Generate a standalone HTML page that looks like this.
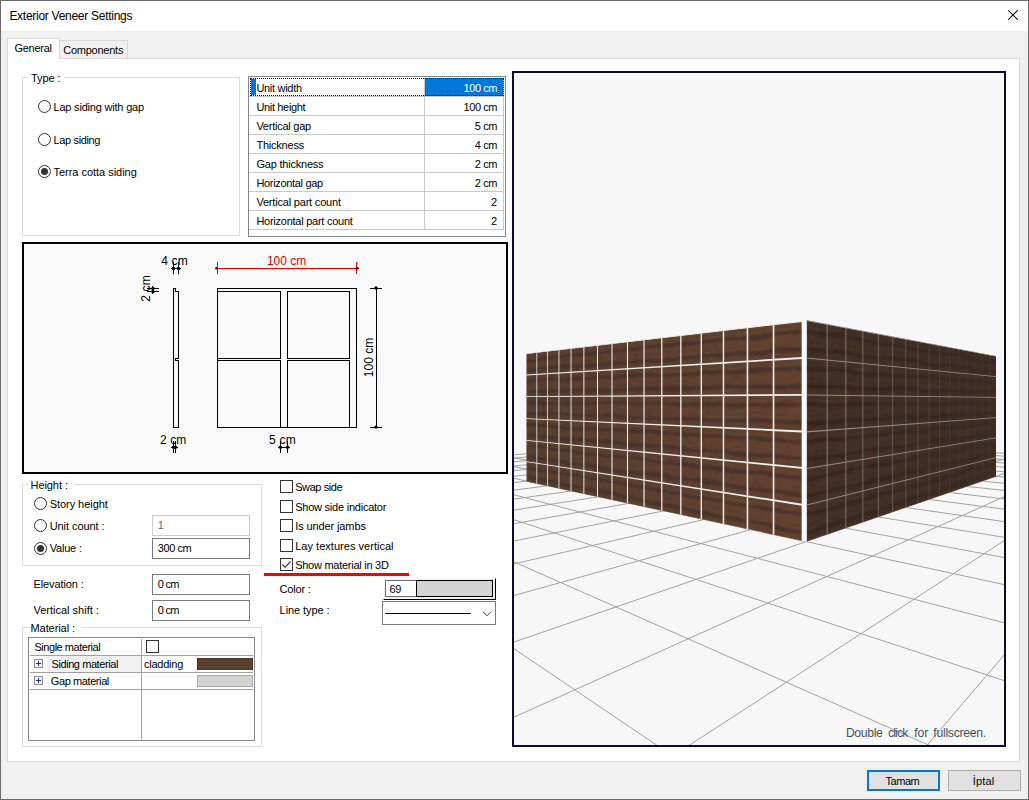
<!DOCTYPE html>
<html><head><meta charset="utf-8"><title>Exterior Veneer Settings</title>
<style>
html,body{margin:0;padding:0}
body{width:1029px;height:800px;position:relative;overflow:hidden;background:#f0f0f0;font-family:"Liberation Sans",sans-serif;font-size:11px;color:#000}
div,span{position:absolute;box-sizing:border-box}
.t{white-space:nowrap;line-height:1;}
.gb{border:1px solid #dcdcdc}
.gbl{background:#fff;height:12px}
.rad{width:13px;height:13px;border-radius:50%;border:1px solid #333;background:#fff}
.rad.on::after{content:"";position:absolute;left:2px;top:2px;width:7px;height:7px;border-radius:50%;background:#333}
.cb{width:13px;height:13px;border:1px solid #333;background:#fff}
.ed{border:1px solid #7a7a7a;background:#fff}
.hl{background:#c8c8c8;height:1px}
.vl{background:#c8c8c8;width:1px}
</style></head><body>
<div style="left:0;top:0;width:1029px;height:800px;border:1px solid #6b6b6b"></div>
<div style="left:1px;top:1px;width:1027px;height:30px;background:#fff"></div>
<svg style="position:absolute;left:1008px;top:10px" width="10" height="10" viewBox="0 0 10 10"><path d="M0.3 0.3L9.7 9.7M9.7 0.3L0.3 9.7" stroke="#000" stroke-width="1.05" fill="none"/></svg>
<div style="left:7px;top:58px;width:1013px;height:704px;background:#fff;border:1px solid #d9d9d9"></div>
<div style="left:59px;top:40px;width:69px;height:19px;background:#f0f0f0;border:1px solid #d9d9d9;border-bottom:none;height:18px"></div>
<div style="left:7px;top:38px;width:53px;height:21px;background:#fff;border:1px solid #d9d9d9;border-bottom:none"></div>
<div class="gb" style="left:22px;top:77px;width:218px;height:159px"></div>
<div class="gbl" style="left:29px;top:72px;width:36px"></div>
<div class="rad" style="left:38px;top:100px"></div>
<div class="rad" style="left:38px;top:133px"></div>
<div class="rad on" style="left:38px;top:165px"></div>
<div style="left:248px;top:76px;width:258px;height:161px;border:1px solid #828790;background:#fff"></div>
<div class="hl" style="left:249px;top:96px;width:255px"></div>
<div class="hl" style="left:249px;top:115px;width:255px"></div>
<div class="hl" style="left:249px;top:134px;width:255px"></div>
<div class="hl" style="left:249px;top:153px;width:255px"></div>
<div class="hl" style="left:249px;top:172px;width:255px"></div>
<div class="hl" style="left:249px;top:191px;width:255px"></div>
<div class="hl" style="left:249px;top:210px;width:255px"></div>
<div class="hl" style="left:249px;top:229px;width:255px"></div>
<div class="vl" style="left:424px;top:78px;height:152px"></div>
<div class="vl" style="left:503px;top:78px;height:152px"></div>
<div style="left:425px;top:78px;width:78px;height:18px;background:#0078d7"></div>
<div style="left:251px;top:79px;width:5px;height:16px;background:#0078d7"></div>
<div style="left:250px;top:78px;width:254px;height:18px;border:1px dotted #000"></div>
<div style="left:22px;top:242px;width:486px;height:232px;border:2px solid #000;background:#fafafa"></div>
<svg style="position:absolute;left:24px;top:244px" width="482" height="228" viewBox="24 244 482 228">
<text x="266.9" y="264.7" font-family="'Liberation Sans', sans-serif" font-size="12" fill="#e00000" textLength="39.4" lengthAdjust="spacing">100 cm</text>
<text x="161.2" y="265.2" font-family="'Liberation Sans', sans-serif" font-size="12" fill="#000" textLength="26.5" lengthAdjust="spacing">4 cm</text>
<text x="160.0" y="443.6" font-family="'Liberation Sans', sans-serif" font-size="12" fill="#000" textLength="26.3" lengthAdjust="spacing">2 cm</text>
<text x="269" y="443.7" font-family="'Liberation Sans', sans-serif" font-size="12" fill="#000" textLength="26.7" lengthAdjust="spacing">5 cm</text>
<text transform="translate(150.4 301.8) rotate(-90)" font-family="'Liberation Sans', sans-serif" font-size="12" fill="#000" textLength="26.5" lengthAdjust="spacing">2 cm</text>
<text transform="translate(372.7 377.2) rotate(-90)" font-family="'Liberation Sans', sans-serif" font-size="12" fill="#000" textLength="39.4" lengthAdjust="spacing">100 cm</text>
<g fill="none" stroke="#000" stroke-width="1" shape-rendering="crispEdges">
<path d="M173.5 288.5H175.5V291.5H178.5V358.5H175.5V360.5H178.5V427.5H173.5Z"/>
<path d="M217.5 288.5H356.5V427.5H217.5Z"/>
<path d="M217.5 291.5H280.5V358.5H217.5"/>
<path d="M287.5 291.5H349.5V358.5H287.5Z"/>
<path d="M217.5 360.5H280.5V427.5"/>
<path d="M287.5 427.5V360.5H349.5V427.5"/>
<path d="M173.5 262V274M178.5 262V274M171 268.5H181"/>
<path d="M147 288.5H159M147 291.5H159M152.5 286V294"/>
<path d="M173.5 441V453M175.5 441V453M171 447.5H178"/>
<path d="M280.5 441V453M287.5 441V453M278 447.5H290"/>
<path d="M376.5 288.5V427.5M370 288.5H382M370 427.5H382"/>
</g>
<g fill="#000">
<circle cx="173.5" cy="268.5" r="1.7"/>
<circle cx="178.5" cy="268.5" r="1.7"/>
<circle cx="152.9" cy="288.5" r="1.7"/>
<circle cx="152.9" cy="291.5" r="1.7"/>
<circle cx="173.5" cy="447.3" r="1.7"/>
<circle cx="175.5" cy="447.3" r="1.7"/>
<circle cx="280.5" cy="447.3" r="1.7"/>
<circle cx="287.5" cy="447.3" r="1.7"/>
<circle cx="376.0" cy="287.9" r="1.7"/>
<circle cx="376.0" cy="427.1" r="1.7"/>
</g>
<g fill="none" stroke="#e60000" stroke-width="1" shape-rendering="crispEdges"><path d="M217.5 262V274M356.5 262V274M215 268.5H359"/></g>
<circle cx="216.6" cy="268.3" r="1.3" fill="#300"/><circle cx="357.4" cy="268.3" r="1.3" fill="#300"/>
</svg>
<div class="gb" style="left:22px;top:484px;width:240px;height:82px"></div>
<div class="gbl" style="left:29px;top:479px;width:45px"></div>
<div class="rad" style="left:34px;top:497px"></div>
<div class="rad" style="left:34px;top:519px"></div>
<div class="rad on" style="left:34px;top:542px"></div>
<div class="ed" style="left:152px;top:515px;width:98px;height:21px;border-color:#cccccc"></div>
<div class="ed" style="left:152px;top:538px;width:98px;height:21px"></div>
<div class="ed" style="left:152px;top:574px;width:98px;height:21px"></div>
<div class="ed" style="left:152px;top:600px;width:98px;height:21px"></div>
<div class="gb" style="left:22px;top:627px;width:240px;height:120px"></div>
<div class="gbl" style="left:29px;top:622px;width:52px"></div>
<div style="left:28px;top:637px;width:227px;height:104px;border:1px solid #828790;background:#fff"></div>
<div class="hl" style="left:30px;top:655px;width:223px;background:#a0a0a0"></div>
<div class="hl" style="left:30px;top:672px;width:223px;background:#a0a0a0"></div>
<div class="hl" style="left:30px;top:689px;width:223px;background:#a0a0a0"></div>
<div class="vl" style="left:141px;top:639px;height:100px;background:#a0a0a0"></div>
<div style="left:47px;top:656px;width:94px;height:16px;background:#f0f0f0"></div>
<div class="cb" style="left:146px;top:640px"></div>
<svg style="position:absolute;left:34px;top:659px" width="9" height="9" viewBox="0 0 9 9"><rect x="0.5" y="0.5" width="8" height="8" fill="#f4f4f4" stroke="#919191"/><path d="M2 4.5H7M4.5 2V7" stroke="#1e3287" stroke-width="1"/></svg>
<svg style="position:absolute;left:34px;top:676px" width="9" height="9" viewBox="0 0 9 9"><rect x="0.5" y="0.5" width="8" height="8" fill="#f4f4f4" stroke="#919191"/><path d="M2 4.5H7M4.5 2V7" stroke="#1e3287" stroke-width="1"/></svg>
<div style="left:197px;top:658px;width:56px;height:12px;background:#5c402f;border:1px solid #4c3528"></div>
<div style="left:197px;top:675px;width:56px;height:12px;background:#d3d3d3;border:1px solid #a9a9a9"></div>
<div class="cb" style="left:280px;top:480px"></div>
<div class="cb" style="left:280px;top:500px"></div>
<div class="cb" style="left:280px;top:519px"></div>
<div class="cb" style="left:280px;top:539px"></div>
<div class="cb" style="left:280px;top:558px"></div>
<svg style="position:absolute;left:280px;top:558px" width="13" height="13" viewBox="0 0 13 13"><path d="M2.5 6.5L5.2 9.3L10.5 3.6" stroke="#222" stroke-width="1.1" fill="none"/></svg>
<div style="left:264px;top:573px;width:145px;height:3px;background:#fd0000"></div>
<div style="left:383px;top:578px;width:113px;height:22px;background:#f0f0f0;border-top:1px solid #fff;border-left:1px solid #fff;border-right:1px solid #000;border-bottom:1px solid #000"></div>
<div style="left:385px;top:580px;width:108px;height:17px;background:#fff;border:1px solid #6d6d6d"></div>
<div style="left:416px;top:580px;width:77px;height:17px;background:#d3d3d3;border:1px solid #000"></div>
<div style="left:382px;top:601px;width:114px;height:24px;background:#fff;border:1px solid #7a7a7a"></div>
<div style="left:385px;top:612.7px;width:86px;height:1.2px;background:#000"></div>
<svg style="position:absolute;left:482px;top:610px" width="10" height="8" viewBox="0 0 10 8"><path d="M1 1.8L5 5.8L9 1.8" stroke="#444" stroke-width="1" fill="none"/></svg>
<div style="left:512px;top:71px;width:494px;height:676px;border:2px solid #0b0b2b;background:#f7f7f7;overflow:hidden"><svg width="490" height="672" viewBox="514 73 490 672" style="position:absolute;left:0;top:0;display:block">
<defs>
<filter id="wav" x="500" y="300" width="520" height="260" filterUnits="userSpaceOnUse">
<feTurbulence type="fractalNoise" baseFrequency="0.035 0.09" numOctaves="2" seed="5" result="n"/>
<feDisplacementMap in="SourceGraphic" in2="n" scale="5" xChannelSelector="R" yChannelSelector="G" result="d"/>
<feGaussianBlur in="d" stdDeviation="0.8"/>
</filter>
<clipPath id="cl"><polygon points="526.5,353.8 802,321.3 802,540.8 526.5,481.4"/></clipPath><clipPath id="cr"><polygon points="806.5,320.5 996,356.2 996,476.6 806.5,541.5"/></clipPath>
<linearGradient id="gl" gradientUnits="userSpaceOnUse" x1="526" y1="0" x2="802" y2="0"><stop offset="0" stop-color="#5e4434"/><stop offset="0.6" stop-color="#664735"/><stop offset="1" stop-color="#6a4834"/></linearGradient>
<linearGradient id="gr" gradientUnits="userSpaceOnUse" x1="806" y1="0" x2="996" y2="0"><stop offset="0" stop-color="#4b362b"/><stop offset="0.5" stop-color="#48352b"/><stop offset="1" stop-color="#45332a"/></linearGradient>
<linearGradient id="ml" gradientUnits="userSpaceOnUse" x1="526" y1="0" x2="802" y2="0"><stop offset="0" stop-color="#fff" stop-opacity="1.0"/><stop offset="1" stop-color="#fff" stop-opacity="1.0"/></linearGradient>
<linearGradient id="mr" gradientUnits="userSpaceOnUse" x1="806" y1="0" x2="996" y2="0"><stop offset="0" stop-color="#fff" stop-opacity="1.0"/><stop offset="1" stop-color="#fff" stop-opacity="0.85"/></linearGradient>
<mask id="mkl" maskUnits="userSpaceOnUse" x="500" y="300" width="520" height="260"><rect x="500" y="300" width="520" height="260" fill="url(#ml)"/></mask>
<mask id="mkr" maskUnits="userSpaceOnUse" x="500" y="300" width="520" height="260"><rect x="500" y="300" width="520" height="260" fill="url(#mr)"/></mask>
</defs>
<rect x="514" y="73" width="490" height="672" fill="#f7f7f7"/>
<path d="M13520.37 5187.6L1436.69 481.06M-7788.52 5184.87L-22.41 497.67M10243.16 5187.18L1372.1 476.91M-4034.02 5185.36L61.69 490.94M6965.95 5186.76L1313.65 473.15M-279.52 5185.84L135.15 485.07M3688.74 5186.34L1260.51 469.74M3474.97 5186.32L199.88 479.9M411.53 5185.92L1211.98 466.62M7229.47 5186.8L257.35 475.3M-2865.68 5185.51L1167.49 463.76M10983.97 5187.28L308.7 471.2M-6142.9 5185.09L1126.56 461.13M7004.7 2649.77L354.87 467.51M-3017.49 2305.34L1088.77 458.7M3419.07 1253.19L396.61 464.17M-1288.3 1261.69L1053.78 456.45M2578.64 925.84L434.52 461.14M-782.18 956.22L1021.28 454.37M2203.52 779.74L469.1 458.38M-540.51 810.36L991.02 452.42M1991.06 696.99L500.78 455.84M-398.96 724.93L962.78 450.61M1854.32 643.72L529.91 453.52M-305.99 668.82L936.36 448.91M1758.93 606.57L556.78 451.37M-240.25 629.14L911.58 447.32M1688.61 579.18L581.65 449.38M-191.31 599.6L888.31 445.82M1634.62 558.15L604.73 447.53M-153.46 576.76L866.4 444.42M1591.86 541.5L626.21 445.82M-123.31 558.56L845.75 443.09M1557.16 527.98L646.24 444.22M-98.73 543.72L826.24 441.84M1528.43 516.79L664.98 442.72M-78.3 531.4L807.79 440.65M1504.27 507.38L682.54 441.32M-61.06 520.99L790.3 439.53M1483.65 499.35L699.02 440M-46.32 512.09L773.72 438.46M1465.85 492.42L714.54 438.76M-33.56 504.39L757.96 437.45M1450.34 486.37L729.16 437.59M-22.41 497.67L742.97 436.48M1436.69 481.06L742.97 436.48" stroke="#a0a4a0" stroke-width="1" fill="none"/>
<polygon points="526.5,353.8 802,321.3 802,540.8 526.5,481.4" fill="url(#gl)"/>
<g clip-path="url(#cl)"><g mask="url(#mkl)"><g filter="url(#wav)"><polygon points="526.5,355.07 802,323.5 802,325.7 526.5,356.34" fill="#2e211b" fill-opacity="0.3"/><polygon points="526.5,358.25 802,329.01 802,334.14 526.5,361.22" fill="#2e211b" fill-opacity="0.55"/><polygon points="526.5,362.6 802,336.53 802,338.37 526.5,363.66" fill="#2e211b" fill-opacity="0.25"/><polygon points="526.5,365.25 802,341.12 802,343.32 526.5,366.52" fill="#2e211b" fill-opacity="0.32"/><polygon points="526.5,368.32 802,346.44 802,351.94 526.5,371.5" fill="#2e211b" fill-opacity="0.55"/><polygon points="526.5,372.88 802,354.33 802,356.53 526.5,374.15" fill="#2e211b" fill-opacity="0.32"/><polygon points="526.5,376.3 802,360.21 802,362.43 526.5,377.59" fill="#2e211b" fill-opacity="0.3"/><polygon points="526.5,379.54 802,365.75 802,370.91 526.5,382.56" fill="#2e211b" fill-opacity="0.55"/><polygon points="526.5,383.96 802,373.31 802,375.16 526.5,385.04" fill="#2e211b" fill-opacity="0.25"/><polygon points="526.5,386.66 802,377.93 802,380.14 526.5,387.96" fill="#2e211b" fill-opacity="0.32"/><polygon points="526.5,389.8 802,383.28 802,388.81 526.5,393.04" fill="#2e211b" fill-opacity="0.55"/><polygon points="526.5,394.44 802,391.21 802,393.42 526.5,395.74" fill="#2e211b" fill-opacity="0.32"/><polygon points="526.5,397.93 802,397.1 802,399.29 526.5,399.25" fill="#2e211b" fill-opacity="0.3"/><polygon points="526.5,401.24 802,402.59 802,407.71 526.5,404.34" fill="#2e211b" fill-opacity="0.55"/><polygon points="526.5,405.77 802,410.09 802,411.92 526.5,406.88" fill="#2e211b" fill-opacity="0.25"/><polygon points="526.5,408.53 802,414.66 802,416.86 526.5,409.86" fill="#2e211b" fill-opacity="0.32"/><polygon points="526.5,411.74 802,419.97 802,425.46 526.5,415.05" fill="#2e211b" fill-opacity="0.55"/><polygon points="526.5,416.49 802,427.84 802,430.04 526.5,417.82" fill="#2e211b" fill-opacity="0.32"/><polygon points="526.5,420 802,433.68 802,435.87 526.5,421.29" fill="#2e211b" fill-opacity="0.3"/><polygon points="526.5,423.24 802,439.14 802,444.24 526.5,426.26" fill="#2e211b" fill-opacity="0.55"/><polygon points="526.5,427.66 802,446.61 802,448.43 526.5,428.74" fill="#2e211b" fill-opacity="0.25"/><polygon points="526.5,430.36 802,451.16 802,453.34 526.5,431.66" fill="#2e211b" fill-opacity="0.32"/><polygon points="526.5,433.5 802,456.43 802,461.89 526.5,436.74" fill="#2e211b" fill-opacity="0.55"/><polygon points="526.5,438.14 802,464.26 802,466.44 526.5,439.44" fill="#2e211b" fill-opacity="0.32"/><polygon points="526.5,441.58 802,470.11 802,472.32 526.5,442.87" fill="#2e211b" fill-opacity="0.3"/><polygon points="526.5,444.79 802,475.63 802,480.78 526.5,447.79" fill="#2e211b" fill-opacity="0.55"/><polygon points="526.5,449.18 802,483.17 802,485.01 526.5,450.25" fill="#2e211b" fill-opacity="0.25"/><polygon points="526.5,451.86 802,487.77 802,489.98 526.5,453.14" fill="#2e211b" fill-opacity="0.32"/><polygon points="526.5,454.96 802,493.11 802,498.63 526.5,458.17" fill="#2e211b" fill-opacity="0.55"/><polygon points="526.5,459.56 802,501.02 802,503.23 526.5,460.84" fill="#2e211b" fill-opacity="0.32"/><polygon points="526.5,462.88 802,506.87 802,509.03 526.5,464.06" fill="#2e211b" fill-opacity="0.3"/><polygon points="526.5,465.84 802,512.28 802,517.34 526.5,468.59" fill="#2e211b" fill-opacity="0.55"/><polygon points="526.5,469.88 802,519.68 802,521.49 526.5,470.86" fill="#2e211b" fill-opacity="0.25"/><polygon points="526.5,472.34 802,524.19 802,526.36 526.5,473.52" fill="#2e211b" fill-opacity="0.32"/><polygon points="526.5,475.19 802,529.43 802,534.84 526.5,478.15" fill="#2e211b" fill-opacity="0.55"/><polygon points="526.5,479.43 802,537.19 802,539.36 526.5,480.61" fill="#2e211b" fill-opacity="0.32"/></g></g></g>
<polygon points="806.5,320.5 996,356.2 996,476.6 806.5,541.5" fill="url(#gr)"/>
<g clip-path="url(#cr)"><g mask="url(#mkr)"><g filter="url(#wav)"><polygon points="806.5,322.75 996,357.43 996,358.66 806.5,325" fill="#201713" fill-opacity="0.3"/><polygon points="806.5,328.38 996,360.5 996,363.38 806.5,333.62" fill="#201713" fill-opacity="0.55"/><polygon points="806.5,336.06 996,364.71 996,365.73 806.5,337.94" fill="#201713" fill-opacity="0.25"/><polygon points="806.5,340.75 996,367.27 996,368.5 806.5,343" fill="#201713" fill-opacity="0.32"/><polygon points="806.5,346.19 996,370.24 996,373.32 806.5,351.81" fill="#201713" fill-opacity="0.55"/><polygon points="806.5,354.25 996,374.65 996,375.88 806.5,356.5" fill="#201713" fill-opacity="0.32"/><polygon points="806.5,360.22 996,377.94 996,379.17 806.5,362.44" fill="#201713" fill-opacity="0.3"/><polygon points="806.5,365.77 996,381.03 996,383.91 806.5,370.95" fill="#201713" fill-opacity="0.55"/><polygon points="806.5,373.36 996,385.25 996,386.28 806.5,375.21" fill="#201713" fill-opacity="0.25"/><polygon points="806.5,377.98 996,387.82 996,389.06 806.5,380.2" fill="#201713" fill-opacity="0.32"/><polygon points="806.5,383.35 996,390.81 996,393.9 806.5,388.89" fill="#201713" fill-opacity="0.55"/><polygon points="806.5,391.3 996,395.24 996,396.48 806.5,393.52" fill="#201713" fill-opacity="0.32"/><polygon points="806.5,397.21 996,398.52 996,399.74 806.5,399.42" fill="#201713" fill-opacity="0.3"/><polygon points="806.5,402.73 996,401.56 996,404.4 806.5,407.88" fill="#201713" fill-opacity="0.55"/><polygon points="806.5,410.27 996,405.72 996,406.74 806.5,412.11" fill="#201713" fill-opacity="0.25"/><polygon points="806.5,414.87 996,408.26 996,409.48 806.5,417.08" fill="#201713" fill-opacity="0.32"/><polygon points="806.5,420.21 996,411.21 996,414.25 806.5,425.73" fill="#201713" fill-opacity="0.55"/><polygon points="806.5,428.12 996,415.57 996,416.79 806.5,430.33" fill="#201713" fill-opacity="0.32"/><polygon points="806.5,434 996,418.82 996,420.04 806.5,436.2" fill="#201713" fill-opacity="0.3"/><polygon points="806.5,439.51 996,421.86 996,424.71 806.5,444.64" fill="#201713" fill-opacity="0.55"/><polygon points="806.5,447.03 996,426.02 996,427.04 806.5,448.87" fill="#201713" fill-opacity="0.25"/><polygon points="806.5,451.62 996,428.56 996,429.78 806.5,453.82" fill="#201713" fill-opacity="0.32"/><polygon points="806.5,456.94 996,431.51 996,434.55 806.5,462.44" fill="#201713" fill-opacity="0.55"/><polygon points="806.5,464.83 996,435.87 996,437.09 806.5,467.03" fill="#201713" fill-opacity="0.32"/><polygon points="806.5,470.69 996,439.08 996,440.26 806.5,472.88" fill="#201713" fill-opacity="0.3"/><polygon points="806.5,476.16 996,442.04 996,444.8 806.5,481.27" fill="#201713" fill-opacity="0.55"/><polygon points="806.5,483.65 996,446.08 996,447.06 806.5,485.47" fill="#201713" fill-opacity="0.25"/><polygon points="806.5,488.21 996,448.54 996,449.72 806.5,490.4" fill="#201713" fill-opacity="0.32"/><polygon points="806.5,493.5 996,451.39 996,454.35 806.5,498.98" fill="#201713" fill-opacity="0.55"/><polygon points="806.5,501.35 996,455.63 996,456.81 806.5,503.54" fill="#201713" fill-opacity="0.32"/><polygon points="806.5,507.19 996,458.74 996,459.88 806.5,509.38" fill="#201713" fill-opacity="0.3"/><polygon points="806.5,512.66 996,461.59 996,464.25 806.5,517.77" fill="#201713" fill-opacity="0.55"/><polygon points="806.5,520.15 996,465.49 996,466.44 806.5,521.97" fill="#201713" fill-opacity="0.25"/><polygon points="806.5,524.71 996,467.86 996,469 806.5,526.9" fill="#201713" fill-opacity="0.32"/><polygon points="806.5,530 996,470.62 996,473.47 806.5,535.48" fill="#201713" fill-opacity="0.55"/><polygon points="806.5,537.85 996,474.7 996,475.84 806.5,540.04" fill="#201713" fill-opacity="0.32"/></g></g></g>
<polygon points="801.7,321.3 806.7,320 806.7,541.8 801.7,540.8" fill="#fdfdfd"/>
<line x1="773.54" y1="324.66" x2="773.54" y2="534.66" stroke="#ececec" stroke-width="1.69"/>
<line x1="747.46" y1="327.73" x2="747.46" y2="529.04" stroke="#ececec" stroke-width="1.59"/>
<line x1="723.47" y1="330.56" x2="723.47" y2="523.87" stroke="#ececec" stroke-width="1.5"/>
<line x1="701.32" y1="333.18" x2="701.32" y2="519.09" stroke="#ececec" stroke-width="1.42"/>
<line x1="680.81" y1="335.6" x2="680.81" y2="514.67" stroke="#ececec" stroke-width="1.34"/>
<line x1="661.77" y1="337.84" x2="661.77" y2="510.57" stroke="#ececec" stroke-width="1.27"/>
<line x1="644.04" y1="339.93" x2="644.04" y2="506.74" stroke="#ececec" stroke-width="1.2"/>
<line x1="627.5" y1="341.89" x2="627.5" y2="503.18" stroke="#ececec" stroke-width="1.13"/>
<line x1="612.02" y1="343.71" x2="612.02" y2="499.84" stroke="#ececec" stroke-width="1.08"/>
<line x1="597.51" y1="345.42" x2="597.51" y2="496.71" stroke="#ececec" stroke-width="1.02"/>
<line x1="583.88" y1="347.03" x2="583.88" y2="493.77" stroke="#ececec" stroke-width="0.97"/>
<line x1="571.06" y1="348.54" x2="571.06" y2="491.01" stroke="#ececec" stroke-width="0.92"/>
<line x1="558.96" y1="349.97" x2="558.96" y2="488.4" stroke="#ececec" stroke-width="0.87"/>
<line x1="547.54" y1="351.32" x2="547.54" y2="485.94" stroke="#ececec" stroke-width="0.83"/>
<line x1="536.74" y1="352.59" x2="536.74" y2="483.61" stroke="#ececec" stroke-width="0.79"/>
<polygon points="526.5,353.5 802,320.7 802,321.9 526.5,354.1" fill="#f2f2f2"/>
<polygon points="526.5,374.6 802,357.05 802,358.95 526.5,375.4" fill="#f2f2f2"/>
<polygon points="526.5,396.2 802,393.95 802,395.85 526.5,397" fill="#f2f2f2"/>
<polygon points="526.5,418.3 802,430.55 802,432.45 526.5,419.1" fill="#f2f2f2"/>
<polygon points="526.5,439.9 802,466.95 802,468.85 526.5,440.7" fill="#f2f2f2"/>
<polygon points="526.5,461.3 802,503.75 802,505.65 526.5,462.1" fill="#f2f2f2"/>
<line x1="827.14" y1="324.39" x2="827.14" y2="534.43" stroke="#8f8b88" stroke-opacity="0.84" stroke-width="1.08"/>
<line x1="845.84" y1="327.91" x2="845.84" y2="528.03" stroke="#8f8b88" stroke-opacity="0.73" stroke-width="1.06"/>
<line x1="862.85" y1="331.12" x2="862.85" y2="522.2" stroke="#8f8b88" stroke-opacity="0.64" stroke-width="1.04"/>
<line x1="878.39" y1="334.04" x2="878.39" y2="516.88" stroke="#8f8b88" stroke-opacity="0.55" stroke-width="1.02"/>
<line x1="892.65" y1="336.73" x2="892.65" y2="512" stroke="#8f8b88" stroke-opacity="0.47" stroke-width="1.01"/>
<line x1="905.77" y1="339.2" x2="905.77" y2="507.5" stroke="#8f8b88" stroke-opacity="0.4" stroke-width="1"/>
<line x1="917.9" y1="341.49" x2="917.9" y2="503.35" stroke="#8f8b88" stroke-opacity="0.33" stroke-width="0.98"/>
<line x1="929.13" y1="343.6" x2="929.13" y2="499.5" stroke="#8f8b88" stroke-opacity="0.27" stroke-width="0.97"/>
<line x1="939.56" y1="345.57" x2="939.56" y2="495.93" stroke="#8f8b88" stroke-opacity="0.21" stroke-width="0.96"/>
<line x1="949.28" y1="347.4" x2="949.28" y2="492.6" stroke="#8f8b88" stroke-opacity="0.16" stroke-width="0.95"/>
<line x1="958.36" y1="349.11" x2="958.36" y2="489.49" stroke="#8f8b88" stroke-opacity="0.11" stroke-width="0.94"/>
<line x1="966.85" y1="350.71" x2="966.85" y2="486.58" stroke="#8f8b88" stroke-opacity="0.1" stroke-width="0.93"/>
<line x1="974.82" y1="352.21" x2="974.82" y2="483.85" stroke="#8f8b88" stroke-opacity="0.1" stroke-width="0.92"/>
<line x1="982.3" y1="353.62" x2="982.3" y2="481.29" stroke="#8f8b88" stroke-opacity="0.1" stroke-width="0.91"/>
<line x1="989.35" y1="354.95" x2="989.35" y2="478.88" stroke="#8f8b88" stroke-opacity="0.1" stroke-width="0.91"/>
<polygon points="806.5,320.1 996,355.95 996,356.45 806.5,320.9" fill="#96928f" fill-opacity="0.95"/>
<polygon points="806.5,357.4 996,376.3 996,377.1 806.5,358.6" fill="#96928f" fill-opacity="0.95"/>
<polygon points="806.5,394.4 996,396.9 996,397.7 806.5,395.6" fill="#96928f" fill-opacity="0.95"/>
<polygon points="806.5,431.2 996,417.2 996,418 806.5,432.4" fill="#96928f" fill-opacity="0.95"/>
<polygon points="806.5,467.9 996,437.5 996,438.3 806.5,469.1" fill="#96928f" fill-opacity="0.95"/>
<polygon points="806.5,504.4 996,457.2 996,458 806.5,505.6" fill="#96928f" fill-opacity="0.95"/>
<text y="736.7" font-family="'Liberation Sans', sans-serif" font-size="12.2" fill="#2c4040" fill-opacity="0.92"><tspan x="845.9" textLength="36.9" lengthAdjust="spacing">Double</tspan> <tspan x="887.9" textLength="20.5" lengthAdjust="spacing">click</tspan> <tspan x="914.3" textLength="14" lengthAdjust="spacing">for</tspan> <tspan x="933.3" textLength="52.9" lengthAdjust="spacing">fullscreen.</tspan></text>
</svg></div>
<div style="left:867px;top:770px;width:73px;height:21px;background:#e1e1e1;border:2px solid #0078d7"></div>
<div style="left:948px;top:770px;width:73px;height:21px;background:#e1e1e1;border:1px solid #adadad"></div>
<span class="t" id="t0" style="font-size:12px;color:#000;top:9.74px;left:9.40px;letter-spacing:-0.275px;">Exterior Veneer Settings</span>
<span class="t" id="t1" style="font-size:11px;color:#000;top:43.39px;left:14.40px;letter-spacing:-0.249px;">General</span>
<span class="t" id="t2" style="font-size:11px;color:#000;top:45.39px;left:63.20px;letter-spacing:-0.237px;">Components</span>
<span class="t" id="t3" style="font-size:11px;color:#000;top:73.39px;left:31.00px;letter-spacing:-0.061px;">Type :</span>
<span class="t" id="t4" style="font-size:11px;color:#000;top:101.69px;left:53.50px;letter-spacing:-0.199px;">Lap siding with gap</span>
<span class="t" id="t5" style="font-size:11px;color:#000;top:134.69px;left:53.50px;letter-spacing:-0.356px;">Lap siding</span>
<span class="t" id="t6" style="font-size:11px;color:#000;top:166.59px;left:53.50px;letter-spacing:-0.026px;">Terra cotta siding</span>
<span class="t" id="t7" style="font-size:11px;color:#000;top:82.89px;left:256.40px;letter-spacing:-0.290px;">Unit width</span>
<span class="t" id="t8" style="font-size:11px;color:#fff;top:82.89px;right:532.00px;letter-spacing:-0.446px;">100 cm</span>
<span class="t" id="t9" style="font-size:11px;color:#000;top:101.89px;left:256.40px;letter-spacing:-0.336px;">Unit height</span>
<span class="t" id="t10" style="font-size:11px;color:#000;top:101.89px;right:532.00px;letter-spacing:-0.446px;">100 cm</span>
<span class="t" id="t11" style="font-size:11px;color:#000;top:120.89px;left:256.40px;letter-spacing:-0.249px;">Vertical gap</span>
<span class="t" id="t12" style="font-size:11px;color:#000;top:120.89px;right:532.00px;letter-spacing:-0.411px;">5 cm</span>
<span class="t" id="t13" style="font-size:11px;color:#000;top:139.89px;left:256.40px;letter-spacing:-0.215px;">Thickness</span>
<span class="t" id="t14" style="font-size:11px;color:#000;top:139.89px;right:532.00px;letter-spacing:-0.411px;">4 cm</span>
<span class="t" id="t15" style="font-size:11px;color:#000;top:158.89px;left:256.40px;letter-spacing:-0.208px;">Gap thickness</span>
<span class="t" id="t16" style="font-size:11px;color:#000;top:158.89px;right:532.00px;letter-spacing:-0.411px;">2 cm</span>
<span class="t" id="t17" style="font-size:11px;color:#000;top:177.89px;left:256.40px;letter-spacing:-0.317px;">Horizontal gap</span>
<span class="t" id="t18" style="font-size:11px;color:#000;top:177.89px;right:532.00px;letter-spacing:-0.411px;">2 cm</span>
<span class="t" id="t19" style="font-size:11px;color:#000;top:196.89px;left:256.40px;letter-spacing:-0.193px;">Vertical part count</span>
<span class="t" id="t20" style="font-size:11px;color:#000;top:196.89px;right:532.00px;">2</span>
<span class="t" id="t21" style="font-size:11px;color:#000;top:215.89px;left:256.40px;letter-spacing:-0.252px;">Horizontal part count</span>
<span class="t" id="t22" style="font-size:11px;color:#000;top:215.89px;right:532.00px;">2</span>
<span class="t" id="t23" style="font-size:11px;color:#000;top:479.89px;left:30.50px;letter-spacing:-0.065px;">Height :</span>
<span class="t" id="t24" style="font-size:11px;color:#000;top:498.89px;left:49.70px;letter-spacing:-0.050px;">Story height</span>
<span class="t" id="t25" style="font-size:11px;color:#000;top:521.09px;left:49.70px;letter-spacing:-0.070px;">Unit count :</span>
<span class="t" id="t26" style="font-size:11px;color:#000;top:543.49px;left:49.70px;letter-spacing:-0.191px;">Value :</span>
<span class="t" id="t27" style="font-size:11px;color:#6d6d6d;top:519.89px;left:157.80px;">1</span>
<span class="t" id="t28" style="font-size:11px;color:#000;top:542.79px;left:157.80px;letter-spacing:-0.446px;">300 cm</span>
<span class="t" id="t29" style="font-size:11px;color:#000;top:579.49px;left:33.50px;letter-spacing:-0.098px;">Elevation :</span>
<span class="t" id="t30" style="font-size:11px;color:#000;top:579.49px;left:157.80px;letter-spacing:-0.711px;">0 cm</span>
<span class="t" id="t31" style="font-size:11px;color:#000;top:604.99px;left:33.50px;letter-spacing:-0.001px;">Vertical shift :</span>
<span class="t" id="t32" style="font-size:11px;color:#000;top:604.99px;left:157.80px;letter-spacing:-0.711px;">0 cm</span>
<span class="t" id="t33" style="font-size:11px;color:#000;top:623.09px;left:30.50px;letter-spacing:-0.075px;">Material :</span>
<span class="t" id="t34" style="font-size:11px;color:#000;top:642.39px;left:34.50px;letter-spacing:-0.471px;">Single material</span>
<span class="t" id="t35" style="font-size:11px;color:#000;top:659.39px;left:51.50px;letter-spacing:-0.424px;">Siding material</span>
<span class="t" id="t36" style="font-size:11px;color:#000;top:659.39px;left:143.90px;letter-spacing:-0.223px;">cladding</span>
<span class="t" id="t37" style="font-size:11px;color:#000;top:676.39px;left:50.80px;letter-spacing:-0.407px;">Gap material</span>
<span class="t" id="t38" style="font-size:11px;color:#000;top:482.09px;left:295.20px;letter-spacing:-0.407px;">Swap side</span>
<span class="t" id="t39" style="font-size:11px;color:#000;top:501.89px;left:295.20px;letter-spacing:-0.231px;">Show side indicator</span>
<span class="t" id="t40" style="font-size:11px;color:#000;top:521.09px;left:295.20px;letter-spacing:-0.111px;">Is under jambs</span>
<span class="t" id="t41" style="font-size:11px;color:#000;top:541.09px;left:295.20px;letter-spacing:0.027px;">Lay textures vertical</span>
<span class="t" id="t42" style="font-size:11px;color:#000;top:560.19px;left:295.20px;letter-spacing:-0.265px;">Show material in 3D</span>
<span class="t" id="t43" style="font-size:11px;color:#000;top:584.39px;left:279.60px;letter-spacing:-0.201px;">Color :</span>
<span class="t" id="t44" style="font-size:11px;color:#000;top:604.89px;left:279.60px;letter-spacing:-0.070px;">Line type :</span>
<span class="t" id="t45" style="font-size:11px;color:#000;top:583.89px;left:389.50px;letter-spacing:-0.325px;">69</span>
<span class="t" id="t46" style="font-size:11px;color:#000;top:775.69px;left:885.60px;letter-spacing:-0.492px;">Tamam</span>
<span class="t" id="t47" style="font-size:11px;color:#000;top:775.69px;left:972.80px;letter-spacing:0.181px;">İptal</span>
</body></html>
